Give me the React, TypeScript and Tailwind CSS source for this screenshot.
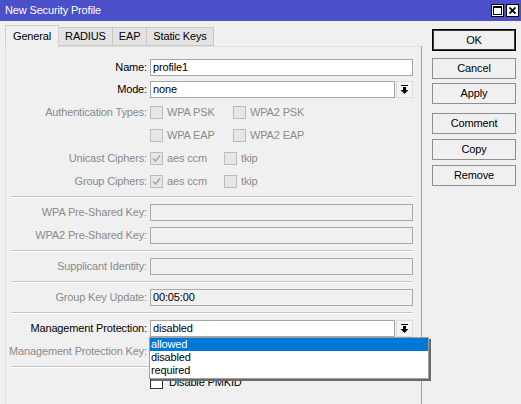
import React from "react"

const FONT = { fontFamily: '"Liberation Sans", Arial, sans-serif' }

function Separator() {
  return <div className="ml-[5px] mr-[8px] my-[3px] h-[2px] border-t border-[#c4c4c4] border-b border-b-white" />
}

function ArrowBtn() {
  return (
    <div className="w-[17px] h-[17px] ml-[1px] border border-[#dcdcdc] bg-[#f4f4f4] flex items-center justify-center">
      <svg width="9" height="9" viewBox="0 0 9 9">
        <rect x="1" y="0" width="7" height="1" fill="#000" />
        <rect x="3" y="2" width="3" height="3" fill="#000" />
        <polygon points="0.5,5 8.5,5 4.5,9" fill="#000" />
      </svg>
    </div>
  )
}

function Check({ checked = false, enabled = false }: { checked?: boolean; enabled?: boolean }) {
  return (
    <div
      className={`w-[13px] h-[13px] border flex items-center justify-center ${
        enabled ? "border-[#333] bg-white" : "border-[#bcbcbc] bg-[#e6e6e6]"
      }`}
    >
      {checked && (
        <svg width="9" height="9" viewBox="0 0 9 9">
          <path d="M1 4.5 L3.5 7 L8 1.5" stroke="#a0a0a0" strokeWidth="1.4" fill="none" />
        </svg>
      )}
    </div>
  )
}

function Row({
  label,
  disabled = false,
  h = "h-[23px]",
  children,
}: {
  label: string
  disabled?: boolean
  h?: string
  children?: React.ReactNode
}) {
  return (
    <div className={`flex items-center ${h}`}>
      <div className={`w-[144px] shrink-0 text-right pr-[3px] ${disabled ? "text-[#8a8a8a]" : "text-black"}`}>
        {label}
      </div>
      <div className="flex items-center w-[263px] relative">{children}</div>
    </div>
  )
}

function Field({ value = "", enabled = false, arrow = false }: { value?: string; enabled?: boolean; arrow?: boolean }) {
  return (
    <>
      <div
        className={`flex-1 h-[17px] border px-[2px] leading-[15px] ${
          enabled ? "bg-white border-[#a5a5a5] text-black" : "bg-[#f0f0f0] border-[#a9a9a9] text-black"
        }`}
      >
        {value}
      </div>
      {arrow && <ArrowBtn />}
    </>
  )
}

function CheckItem({ label, checked = false, w }: { label: string; checked?: boolean; w: string }) {
  return (
    <div className={`flex items-center ${w}`}>
      <Check checked={checked} />
      <span className="ml-[4px] text-[#8a8a8a]">{label}</span>
    </div>
  )
}

function Button({ label, def = false, h = "h-[21px]", mt }: { label: string; def?: boolean; h?: string; mt: string }) {
  return (
    <div
      className={`${h} ${mt} w-[84px] flex items-center justify-center bg-[#f0f0f0] border ${
        def ? "border-black shadow-[inset_0_0_0_1px_#3a3a3a]" : "border-[#8f8f8f]"
      }`}
    >
      {label}
    </div>
  )
}

export default function App() {
  return (
    <div
      className="w-[521px] h-[404px] overflow-hidden bg-[#f0f0f0] text-[11px] tracking-[-0.15px] flex flex-col"
      style={FONT}
    >
      {/* title bar */}
      <div className="h-[21px] shrink-0 bg-[#4b4fc8] flex items-center pl-[5px] pr-[2px] text-white">
        <span className="flex-1">New Security Profile</span>
        <div className="flex gap-[2px]">
          <div className="w-[13px] h-[13px] bg-white border border-black flex items-center justify-center">
            <div className="w-[9px] h-[9px] border border-black border-t-2" />
          </div>
          <div className="w-[13px] h-[13px] bg-white border border-black flex items-center justify-center">
            <svg width="7" height="7" viewBox="0 0 7 7">
              <path d="M0.5 0.5 L6.5 6.5 M6.5 0.5 L0.5 6.5" stroke="#000" strokeWidth="1.8" />
            </svg>
          </div>
        </div>
      </div>

      <div className="flex flex-1 min-h-0">
        {/* left: tabs + panel */}
        <div className="w-[427px] pl-[5px] pt-[4px] flex flex-col">
          <div className="flex items-end h-[21px]">
            <div className="h-[22px] px-[7px] flex items-center bg-[#f0f0f0] border border-b-0 border-[#d0d0d0] -mb-[1px] relative z-10">
              General
            </div>
            <div className="h-[19px] px-[6px] flex items-center bg-[#e3e3e3] border border-[#c8c8c8] border-l-0">
              RADIUS
            </div>
            <div className="h-[19px] px-[6px] flex items-center bg-[#e3e3e3] border border-[#c8c8c8] border-l-0">
              EAP
            </div>
            <div className="h-[19px] px-[6px] flex items-center bg-[#e3e3e3] border border-[#c8c8c8] border-l-0">
              Static Keys
            </div>
          </div>

          <div className="flex-1 w-[417px] border-t border-l border-[#e0e0e0] border-r border-r-[#a0a0a0] bg-[#f0f0f0] pt-[9px]">
            <Row label="Name:" h="h-[22px]">
              <Field value="profile1" enabled />
            </Row>
            <Row label="Mode:" h="h-[22px]">
              <Field value="none" enabled arrow />
            </Row>
            <Row label="Authentication Types:" disabled h="h-[24px]">
              <CheckItem label="WPA PSK" w="w-[83px]" />
              <CheckItem label="WPA2 PSK" w="w-[90px]" />
            </Row>
            <Row label="" disabled>
              <CheckItem label="WPA EAP" w="w-[83px]" />
              <CheckItem label="WPA2 EAP" w="w-[90px]" />
            </Row>
            <Row label="Unicast Ciphers:" disabled>
              <CheckItem label="aes ccm" checked w="w-[74px]" />
              <CheckItem label="tkip" w="w-[60px]" />
            </Row>
            <Row label="Group Ciphers:" disabled>
              <CheckItem label="aes ccm" checked w="w-[74px]" />
              <CheckItem label="tkip" w="w-[60px]" />
            </Row>
            <Separator />
            <Row label="WPA Pre-Shared Key:" disabled>
              <Field />
            </Row>
            <Row label="WPA2 Pre-Shared Key:" disabled>
              <Field />
            </Row>
            <Separator />
            <Row label="Supplicant Identity:" disabled>
              <Field />
            </Row>
            <Separator />
            <Row label="Group Key Update:" disabled>
              <Field value="00:05:00" />
            </Row>
            <Separator />
            <Row label="Management Protection:">
              <Field value="disabled" enabled arrow />
              <div className="absolute left-[-1px] top-[17px] w-[280px] bg-white border border-[#a0a0a0] shadow-[2px_2px_0_#6a6a6a] z-20 pb-[1px]">
                <div className="h-[13px] leading-[13px] px-[1px] bg-[#0078d7] text-white">allowed</div>
                <div className="h-[13px] leading-[13px] px-[1px] text-black">disabled</div>
                <div className="h-[13px] leading-[13px] px-[1px] text-black">required</div>
              </div>
            </Row>
            <Row label="Management Protection Key:" disabled>
              <Field />
            </Row>
            <Separator />
            <Row label="">
              <Check enabled />
              <span className="ml-[6px]">Disable PMKID</span>
            </Row>
          </div>
        </div>

        {/* right: buttons */}
        <div className="flex flex-col pl-[5px]">
          <Button label="OK" def h="h-[22px]" mt="mt-[8px]" />
          <Button label="Cancel" mt="mt-[7px]" />
          <Button label="Apply" mt="mt-[4px]" />
          <Button label="Comment" mt="mt-[9px]" />
          <Button label="Copy" mt="mt-[5px]" />
          <Button label="Remove" mt="mt-[5px]" />
        </div>
      </div>
    </div>
  )
}
